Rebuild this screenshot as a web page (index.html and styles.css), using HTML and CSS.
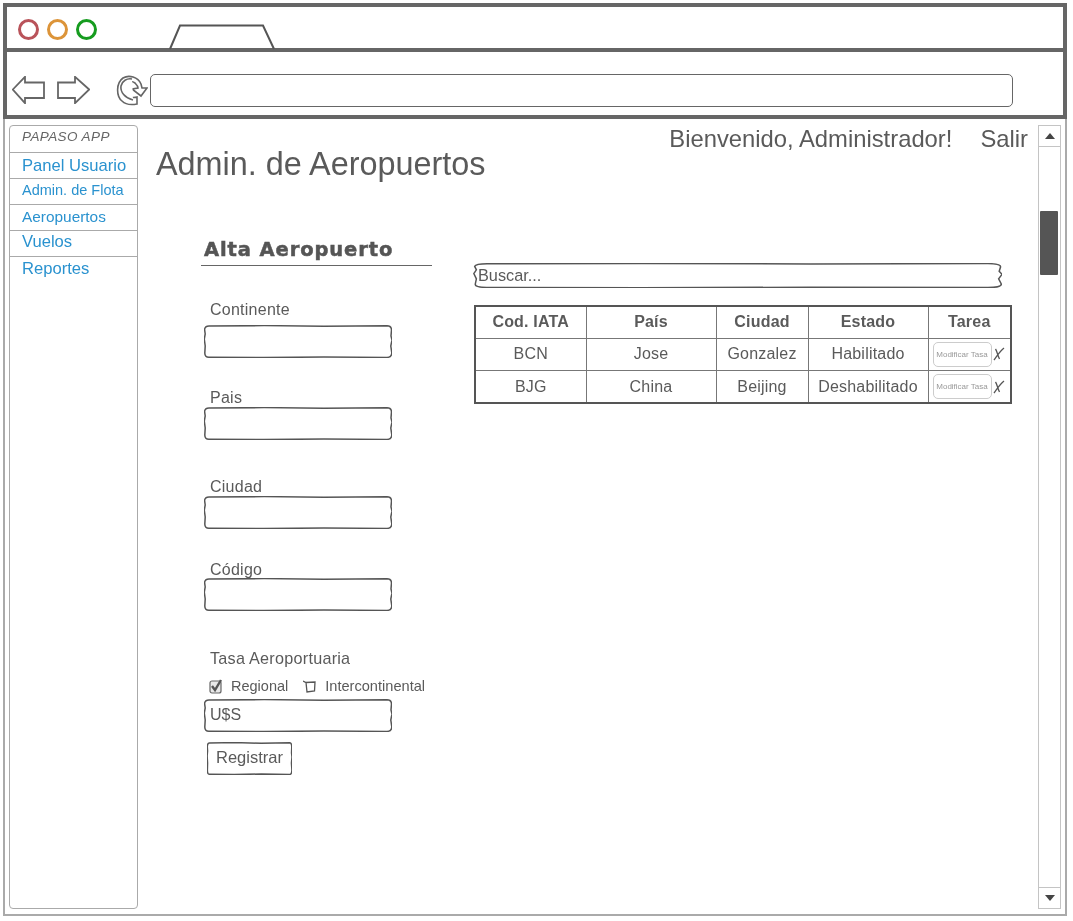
FILE: index.html
```
<!DOCTYPE html>
<html lang="es">
<head>
<meta charset="utf-8">
<title>Admin. de Aeropuertos</title>
<link rel="stylesheet" href="styles.css">
</head>
<body>
<svg class="defs" width="0" height="0" aria-hidden="true">
  <symbol id="wobble" viewBox="0 0 188 33" preserveAspectRatio="none">
    <path vector-effect="non-scaling-stroke" d="M5 1 L60 .6 L120 1.2 L183 .8 Q187.5 1 187.5 5 L187 11 L188 15 L186.8 21 L187.8 28 Q187.6 32.3 183 32.4 L120 32 L60 32.6 L5 32.2 Q.8 32.3 .8 28 L1.2 21 L.3 14 L1.2 9 L.6 4.5 Q1 1 5 1Z"/>
  </symbol>
  <symbol id="cross" viewBox="0 0 12 14">
    <path d="M1 13 C4 9 7 4 11 1 M2.500 2 C4 4 4.500 8 6.500 12"/>
  </symbol>
</svg>
<div class="window">
  <header class="titlebar">
    <div class="dots">
      <span class="dot dot-red"></span>
      <span class="dot dot-orange"></span>
      <span class="dot dot-green"></span>
    </div>
    <svg class="tab" viewBox="0 0 107 26"><path d="M1 25 L11 1.500 L94 1.500 L105 25"/></svg>
  </header>
  <div class="navbar">
    <svg class="arrow" viewBox="0 0 33 28"><path d="M.8 13.500 L13 .8 L13 6.500 L32 6.500 L32 22 L13 22 L13 27.200 Z"/></svg>
    <svg class="arrow arrow-next" viewBox="0 0 33 28"><path d="M32.200 13.500 L18 .8 L18 6.500 L1 6.500 L1 22 L18 22 L18 27.200 Z"/></svg>
    <svg class="reload" viewBox="0 0 32 32">
      <path d="M25 10 C22 3 13 .5 7 4 C0 9 0 22 6 27 C10 31 16 31 21 30 L21 23 C14 25 7 20 8 14 C9 8 15 6 19 9 C21 11 22 12 22 14 L16 15 L25 22 L31 14 L26 14 Z"/>
      <path d="M17 26 C9 24 4 18 5 12 C6 7 11 4 16 5"/>
    </svg>
    <div class="address"></div>
  </div>
  <main class="page">
    <nav class="sidebar">
      <div class="brand">PAPASO APP</div>
      <a class="nav-item">Panel Usuario</a>
      <a class="nav-item nav-small">Admin. de Flota</a>
      <a class="nav-item nav-mid">Aeropuertos</a>
      <a class="nav-item nav-vuelos">Vuelos</a>
      <a class="nav-item nav-last">Reportes</a>
    </nav>
    <section class="content">
      <div class="topbar">
        <span>Bienvenido, Administrador!</span>
        <span>Salir</span>
      </div>
      <h1 class="title">Admin. de Aeropuertos</h1>
      <div class="columns">
        <form class="form">
          <h2 class="form-title">Alta Aeropuerto</h2>
          <label class="label label-continente">Continente</label>
          <div class="input"><svg class="frame"><use href="#wobble"/></svg></div>
          <label class="label label-pais">Pais</label>
          <div class="input"><svg class="frame"><use href="#wobble"/></svg></div>
          <label class="label label-ciudad">Ciudad</label>
          <div class="input"><svg class="frame"><use href="#wobble"/></svg></div>
          <label class="label label-codigo">Código</label>
          <div class="input"><svg class="frame"><use href="#wobble"/></svg></div>
          <label class="label label-tasa">Tasa Aeroportuaria</label>
          <div class="checks">
            <svg class="check check-on" viewBox="0 0 14 16">
              <rect class="check-bg" x="1" y="3" width="11" height="12" rx="2"/>
              <path class="check-mark" d="M3 8 L6 12 L12 2"/>
            </svg>
            <span class="check-label">Regional</span>
            <svg class="check check-off" viewBox="0 0 14 14"><path d="M0 1 L3 2.500 L12 2 L11.500 11 L4 12 L3 2.500"/></svg>
            <span class="check-label check-label-small">Intercontinental</span>
          </div>
          <div class="input input-text">U$S<svg class="frame"><use href="#wobble"/></svg></div>
          <div class="button">Registrar<svg class="frame"><use href="#wobble"/></svg></div>
        </form>
        <div class="results">
          <div class="search">Buscar...<svg class="frame"><use href="#wobble"/></svg></div>
          <table class="table">
            <colgroup>
              <col class="col-a"><col class="col-b"><col class="col-c"><col class="col-d"><col class="col-e">
            </colgroup>
            <thead>
              <tr><th>Cod. IATA</th><th>País</th><th>Ciudad</th><th>Estado</th><th>Tarea</th></tr>
            </thead>
            <tbody>
              <tr>
                <td>BCN</td><td>Jose</td><td>Gonzalez</td><td>Habilitado</td>
                <td class="task"><div class="task-inner"><span class="mini-btn">Modificar Tasa</span><svg class="remove"><use href="#cross"/></svg></div></td>
              </tr>
              <tr>
                <td>BJG</td><td>China</td><td>Beijing</td><td>Deshabilitado</td>
                <td class="task"><div class="task-inner"><span class="mini-btn">Modificar Tasa</span><svg class="remove"><use href="#cross"/></svg></div></td>
              </tr>
            </tbody>
          </table>
        </div>
      </div>
    </section>
    <aside class="scrollbar">
      <div class="scroll-btn"><span class="tri tri-up"></span></div>
      <div class="track"><div class="thumb"></div></div>
      <div class="scroll-btn scroll-btn-down"><span class="tri tri-down"></span></div>
    </aside>
  </main>
</div>
</body>
</html>
```
FILE: styles.css
```
* { box-sizing: border-box; }
html, body { margin: 0; height: 100%; background: #fff; }
body {
  padding: 3px 0 0 3px;
  font-family: "Liberation Sans", Arial, sans-serif;
  color: #5a5a5a;
  filter: blur(0.5px);
  overflow: hidden;
}
.defs { position: absolute; }
.window { width: 1064px; height: 913px; display: flex; flex-direction: column; }

.frame {
  position: absolute;
  inset: 0;
  width: 100%;
  height: 100%;
  overflow: visible;
  fill: none;
  stroke: #555;
  stroke-width: 1.5;
  pointer-events: none;
}

.titlebar {
  height: 49px;
  flex: none;
  border: 4px solid #666;
  display: flex;
  align-items: flex-start;
}
.dots { display: flex; gap: 8px; margin: 12px 0 0 11px; }
.dot { width: 21px; height: 21px; border-radius: 50%; border: 3px solid; }
.dot-red { border-color: #b9535a; }
.dot-orange { border-color: #dc9439; }
.dot-green { border-color: #169c1f; }
.tab { width: 107px; height: 26px; margin: 17px 0 0 72px; fill: none; stroke: #555; stroke-width: 2; }

.navbar {
  height: 67px;
  flex: none;
  border: 4px solid #666;
  border-top: 0;
  display: flex;
  align-items: center;
  padding: 13px 50px 0 5px;
}
.arrow { width: 33px; height: 28px; fill: none; stroke: #666; stroke-width: 1.800; flex: none; }
.arrow-next { margin-left: 12px; }
.reload { width: 32px; height: 32px; margin-left: 26px; fill: #fff; stroke: #666; stroke-width: 1.600; flex: none; }
.address {
  flex: 1;
  height: 33px;
  margin-left: 2px;
  border: 1.500px solid #666;
  border-radius: 5px;
}

.page {
  flex: 1;
  min-height: 0;
  display: flex;
  border: 2px solid #aaa;
  border-top: 0;
  padding: 6px 4px 5px 4px;
}

.sidebar {
  width: 129px;
  flex: none;
  border: 1.500px solid #aaa;
  border-radius: 4px;
  display: flex;
  flex-direction: column;
}
.brand {
  height: 27px;
  padding: 3px 0 0 12px;
  font-size: 13.500px;
  font-style: italic;
  letter-spacing: .4px;
  color: #666;
  border-bottom: 1px solid #aaa;
}
.nav-item {
  height: 26px;
  padding: 4px 0 0 12px;
  font-size: 16.600px;
  line-height: 18px;
  color: #2a92cf;
  border-bottom: 1px solid #aaa;
}
.nav-small { font-size: 14.500px; padding-top: 2px; }
.nav-mid { font-size: 15.400px; padding-top: 3px; }
.nav-vuelos { padding-top: 2px; }
.nav-last { border-bottom: 0; padding-top: 3px; }

.content { flex: 1; min-width: 0; }
.topbar {
  height: 21px;
  line-height: 28px;
  font-size: 23.800px;
  display: flex;
  justify-content: flex-end;
  gap: 28px;
  padding-right: 10px;
  white-space: nowrap;
}
.title {
  margin: 0 0 0 18px;
  font-weight: normal;
  font-size: 32.400px;
  line-height: 36px;
}

.columns { display: flex; margin: 56px 0 0 63px; }
.form { width: 231px; flex: none; }
.form-title {
  margin: 0;
  height: 28px;
  padding-left: 3px;
  line-height: 24px;
  font-family: "DejaVu Sans", sans-serif;
  font-weight: bold;
  font-size: 19.500px;
  letter-spacing: .9px;
  -webkit-text-stroke: .5px #555;
  color: #555;
  white-space: nowrap;
  border-bottom: 1px solid #666;
}
.label {
  display: block;
  height: 20px;
  line-height: 20px;
  margin-left: 9px;
  font-size: 16px;
  letter-spacing: .25px;
}
.label-continente { margin-top: 34px; margin-bottom: 5px; }
.label-pais { margin-top: 30px; margin-bottom: -1px; }
.label-ciudad { margin-top: 37px; margin-bottom: -1px; }
.label-codigo { margin-top: 31px; margin-bottom: -2px; }
.label-tasa { margin-top: 37px; font-size: 16.200px; }

.input { position: relative; width: 188px; height: 33px; margin-left: 3px; }
.input-text { font-size: 16px; line-height: 31px; padding-left: 6px; margin-top: 3px; }

.checks {
  display: flex;
  align-items: center;
  height: 20px;
  margin: 8px 0 0 8px;
  white-space: nowrap;
}
.check { flex: none; }
.check-on { width: 14px; height: 16px; }
.check-bg { fill: #e8e8e8; stroke: #666; stroke-width: 1.200; }
.check-mark { fill: none; stroke: #555; stroke-width: 2.400; }
.check-off { width: 14px; height: 14px; margin: 2px 0 0 15px; fill: none; stroke: #555; stroke-width: 1.300; }
.check-label { font-size: 14.500px; margin-left: 8px; }
.check-label-small { font-size: 14.600px; }

.button {
  position: relative;
  width: 85px;
  height: 33px;
  margin: 10px 0 0 6px;
  text-align: center;
  font-size: 16.500px;
  line-height: 30px;
}

.results { width: 538px; flex: none; padding-top: 25px; margin-left: 41px; }
.search {
  position: relative;
  width: 529px;
  height: 25px;
  padding-left: 5px;
  font-size: 16.300px;
  line-height: 25px;
}
.table {
  width: 536px;
  height: 99px;
  margin: 17px 0 0 1px;
  border-collapse: collapse;
  table-layout: fixed;
  font-size: 16px;
  letter-spacing: .2px;
  border: 2px solid #555;
}
.col-a { width: 111px; }
.col-b { width: 130px; }
.col-c { width: 92px; }
.col-d { width: 120px; }
.col-e { width: 83px; }
.table th, .table td {
  padding: 0;
  height: 32px;
  text-align: center;
  white-space: nowrap;
  border: 1px solid #777;
}
.table th { font-weight: bold; }
.task-inner { display: flex; align-items: center; padding-left: 4px; }
.mini-btn {
  width: 59px;
  height: 25px;
  line-height: 23px;
  font-size: 8px;
  letter-spacing: 0;
  color: #999;
  border: 1px solid #ccc;
  border-radius: 5px;
  flex: none;
}
.remove { width: 12px; height: 14px; flex: none; margin-left: 1px; fill: none; stroke: #555; stroke-width: 1.300; }

.scrollbar {
  width: 23px;
  flex: none;
  border: 1.500px solid #c4c4c4;
  display: flex;
  flex-direction: column;
}
.scroll-btn {
  height: 21px;
  flex: none;
  display: flex;
  align-items: center;
  justify-content: center;
  border-bottom: 1.500px solid #c4c4c4;
}
.scroll-btn-down { border-bottom: 0; border-top: 1.500px solid #c4c4c4; }
.tri { width: 0; height: 0; border-left: 5px solid transparent; border-right: 5px solid transparent; }
.tri-up { border-bottom: 6px solid #444; }
.tri-down { border-top: 6px solid #444; }
.track { flex: 1; padding: 64px 0 0 1px; }
.thumb { width: 18px; height: 64px; background: #555; border-radius: 1px; }
```
